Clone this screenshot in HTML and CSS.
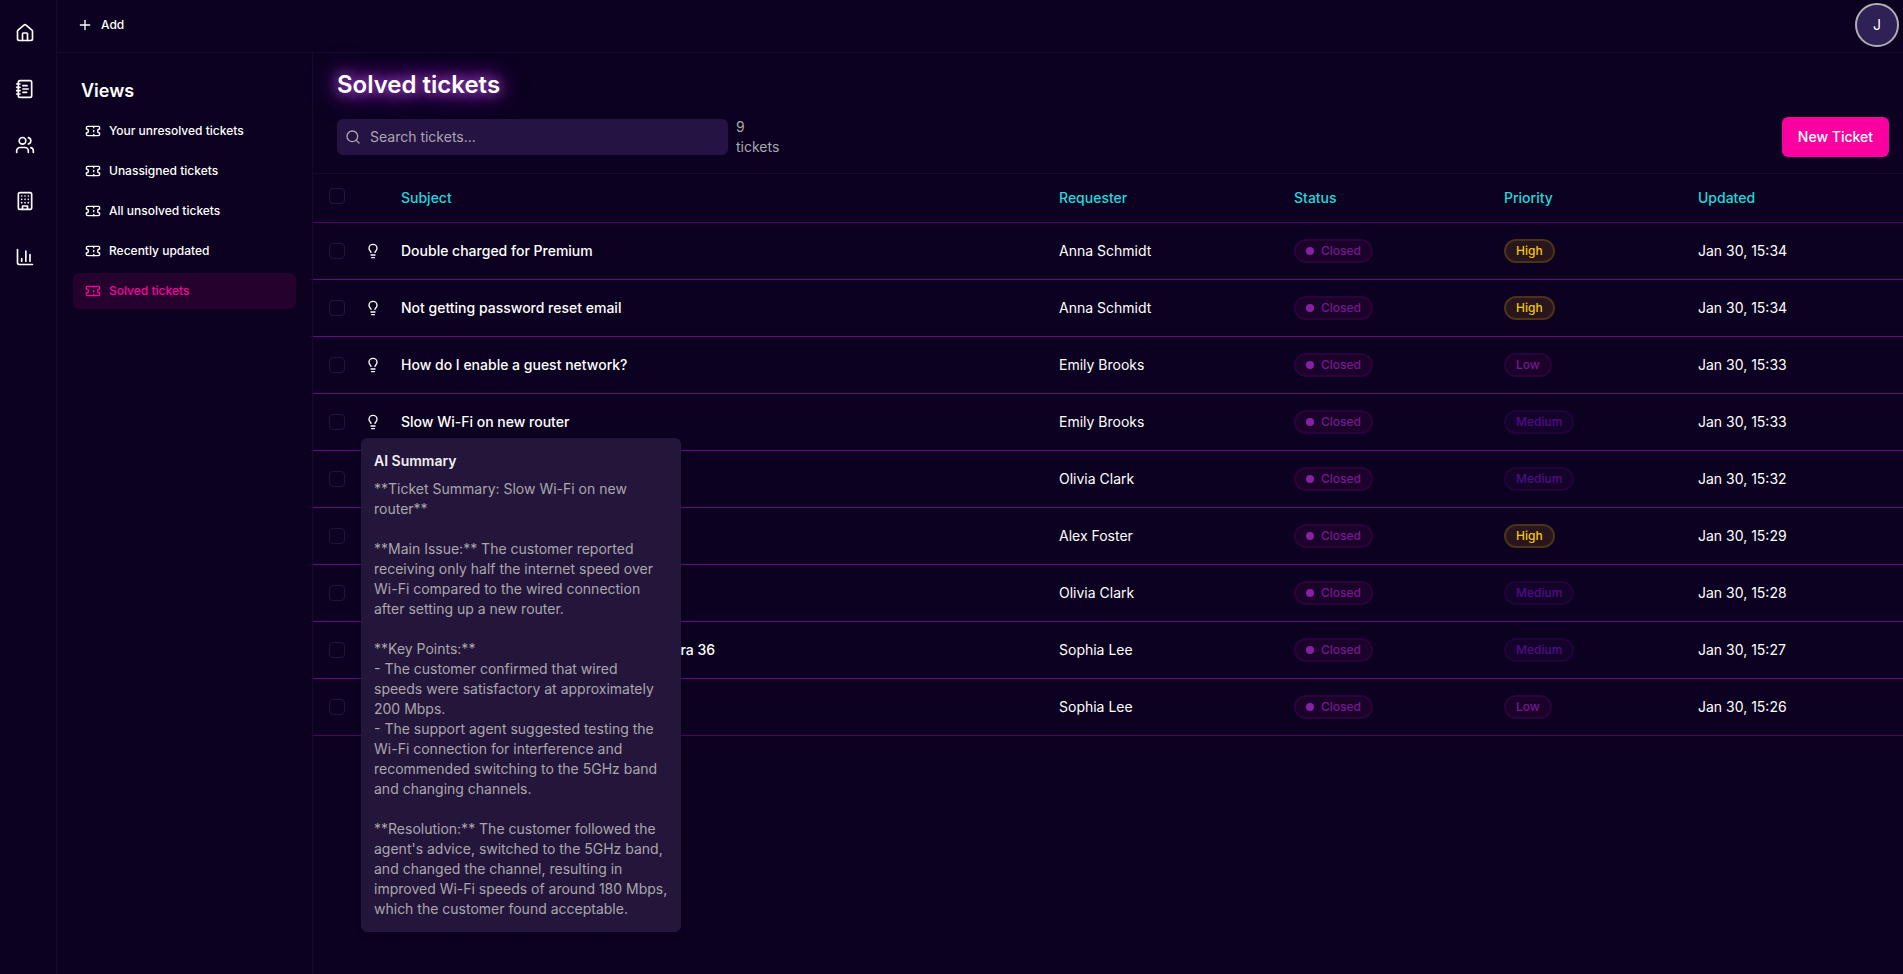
FILE: index.html
```html
<!DOCTYPE html>
<html lang="en">
<head>
<meta charset="utf-8">
<meta name="viewport" content="width=device-width, initial-scale=1">
<title>Solved tickets</title>
<link rel="stylesheet" href="styles.css">
</head>
<body>
<svg class="sprite" aria-hidden="true">
  <symbol id="ticket" viewBox="0 0 24 24"><path d="M2 9a3 3 0 0 1 0 6v2a2 2 0 0 0 2 2h16a2 2 0 0 0 2-2v-2a3 3 0 0 1 0-6V7a2 2 0 0 0-2-2H4a2 2 0 0 0-2 2Z"/><path d="M13 5v2"/><path d="M13 17v2"/><path d="M13 11v2"/></symbol>
  <symbol id="bulb" viewBox="0 0 24 24"><path d="M15 14c.2-1 .7-1.7 1.5-2.5 1-.9 1.5-2.2 1.5-3.5A6 6 0 0 0 6 8c0 1 .2 2.2 1.5 3.5.7.7 1.3 1.5 1.5 2.5"/><path d="M9 18h6"/><path d="M10 22h4"/></symbol>
</svg>
<div class="app">
  <nav class="rail" aria-label="Main">
    <a href="#home" aria-label="Home"><svg class="icon icon-lg" viewBox="0 0 24 24"><path d="M15 21v-8a1 1 0 0 0-1-1h-4a1 1 0 0 0-1 1v8"/><path d="M3 10a2 2 0 0 1 .709-1.528l7-5.999a2 2 0 0 1 2.582 0l7 5.999A2 2 0 0 1 21 10v9a2 2 0 0 1-2 2H5a2 2 0 0 1-2-2z"/></svg></a>
    <a href="#tickets" aria-label="Tickets"><svg class="icon icon-lg" viewBox="0 0 24 24"><path d="M2 6h4"/><path d="M2 10h4"/><path d="M2 14h4"/><path d="M2 18h4"/><rect width="16" height="20" x="4" y="2" rx="2"/><path d="M9.5 8h5"/><path d="M9.5 12H16"/><path d="M9.5 16H14"/></svg></a>
    <a href="#users" aria-label="Users"><svg class="icon icon-lg" viewBox="0 0 24 24"><path d="M16 21v-2a4 4 0 0 0-4-4H6a4 4 0 0 0-4 4v2"/><circle cx="9" cy="7" r="4"/><path d="M22 21v-2a4 4 0 0 0-3-3.87"/><path d="M16 3.13a4 4 0 0 1 0 7.75"/></svg></a>
    <a href="#organizations" aria-label="Organizations"><svg class="icon icon-lg" viewBox="0 0 24 24"><rect width="16" height="20" x="4" y="2" rx="2"/><path d="M9 22v-4h6v4"/><path d="M8 6h.01"/><path d="M16 6h.01"/><path d="M12 6h.01"/><path d="M12 10h.01"/><path d="M12 14h.01"/><path d="M16 10h.01"/><path d="M16 14h.01"/><path d="M8 10h.01"/><path d="M8 14h.01"/></svg></a>
    <a href="#reports" aria-label="Reports"><svg class="icon icon-lg" viewBox="0 0 24 24"><path d="M3 3v16a2 2 0 0 0 2 2h16"/><path d="M18 17V9"/><path d="M13 17V5"/><path d="M8 17v-3"/></svg></a>
  </nav>
  <div class="shell">
    <header class="topbar">
      <button class="add" type="button"><svg class="icon" viewBox="0 0 24 24"><path d="M5 12h14"/><path d="M12 5v14"/></svg>Add</button>
      <button class="avatar" type="button">J</button>
    </header>
    <div class="body">
      <aside class="sidebar">
        <h2>Views</h2>
        <nav class="views" aria-label="Views">
          <a href="#mine"><svg class="icon"><use href="#ticket"/></svg>Your unresolved tickets</a>
          <a href="#unassigned"><svg class="icon"><use href="#ticket"/></svg>Unassigned tickets</a>
          <a href="#unsolved"><svg class="icon"><use href="#ticket"/></svg>All unsolved tickets</a>
          <a href="#recent"><svg class="icon"><use href="#ticket"/></svg>Recently updated</a>
          <a class="active" href="#solved" aria-current="page"><svg class="icon"><use href="#ticket"/></svg>Solved tickets</a>
        </nav>
      </aside>
      <main class="main">
        <div class="heading">
          <h1>Solved tickets</h1>
          <div class="toolbar">
            <div class="search">
              <svg class="icon" viewBox="0 0 24 24"><circle cx="11" cy="11" r="8"/><path d="m21 21-4.3-4.3"/></svg>
              <input type="text" placeholder="Search tickets..." aria-label="Search tickets">
            </div>
            <span class="count">9 tickets</span>
            <button class="primary" type="button">New Ticket</button>
          </div>
        </div>
        <table class="tickets">
          <colgroup><col class="c-check"><col class="c-ai"><col><col class="c-requester"><col class="c-status"><col class="c-priority"><col class="c-updated"></colgroup>
          <thead>
            <tr><th class="check"><input type="checkbox" aria-label="Select all"></th><th class="ai"></th><th>Subject</th><th>Requester</th><th>Status</th><th>Priority</th><th>Updated</th></tr>
          </thead>
          <tbody>
            <tr><td class="check"><input type="checkbox" aria-label="Select ticket"></td><td class="ai"><button class="hint" type="button" aria-label="AI summary"><svg class="icon"><use href="#bulb"/></svg></button></td><td class="subject">Double charged for Premium</td><td>Anna Schmidt</td><td><span class="pill closed">Closed</span></td><td><span class="pill high">High</span></td><td>Jan 30, 15:34</td></tr>
            <tr><td class="check"><input type="checkbox" aria-label="Select ticket"></td><td class="ai"><button class="hint" type="button" aria-label="AI summary"><svg class="icon"><use href="#bulb"/></svg></button></td><td class="subject">Not getting password reset email</td><td>Anna Schmidt</td><td><span class="pill closed">Closed</span></td><td><span class="pill high">High</span></td><td>Jan 30, 15:34</td></tr>
            <tr><td class="check"><input type="checkbox" aria-label="Select ticket"></td><td class="ai"><button class="hint" type="button" aria-label="AI summary"><svg class="icon"><use href="#bulb"/></svg></button></td><td class="subject">How do I enable a guest network?</td><td>Emily Brooks</td><td><span class="pill closed">Closed</span></td><td><span class="pill low">Low</span></td><td>Jan 30, 15:33</td></tr>
            <tr><td class="check"><input type="checkbox" aria-label="Select ticket"></td><td class="ai"><div class="anchor"><button class="hint" type="button" aria-label="AI summary"><svg class="icon"><use href="#bulb"/></svg></button>
              <div class="popover"><h3>AI Summary</h3><p>**Ticket Summary: Slow Wi-Fi on new router**

**Main Issue:** The customer reported receiving only half the internet speed over Wi-Fi compared to the wired connection after setting up a new router.

**Key Points:**
- The customer confirmed that wired speeds were satisfactory at approximately 200 Mbps.
- The support agent suggested testing the Wi-Fi connection for interference and recommended switching to the 5GHz band and changing channels.

**Resolution:** The customer followed the agent's advice, switched to the 5GHz band, and changed the channel, resulting in improved Wi-Fi speeds of around 180 Mbps, which the customer found acceptable.</p></div></div></td><td class="subject">Slow Wi-Fi on new router</td><td>Emily Brooks</td><td><span class="pill closed">Closed</span></td><td><span class="pill medium">Medium</span></td><td>Jan 30, 15:33</td></tr>
            <tr><td class="check"><input type="checkbox" aria-label="Select ticket"></td><td class="ai"></td><td class="subject"></td><td>Olivia Clark</td><td><span class="pill closed">Closed</span></td><td><span class="pill medium">Medium</span></td><td>Jan 30, 15:32</td></tr>
            <tr><td class="check"><input type="checkbox" aria-label="Select ticket"></td><td class="ai"></td><td class="subject"></td><td>Alex Foster</td><td><span class="pill closed">Closed</span></td><td><span class="pill high">High</span></td><td>Jan 30, 15:29</td></tr>
            <tr><td class="check"><input type="checkbox" aria-label="Select ticket"></td><td class="ai"></td><td class="subject"></td><td>Olivia Clark</td><td><span class="pill closed">Closed</span></td><td><span class="pill medium">Medium</span></td><td>Jan 30, 15:28</td></tr>
            <tr><td class="check"><input type="checkbox" aria-label="Select ticket"></td><td class="ai"></td><td class="subject">Question about the new battery life for Ultra 36</td><td>Sophia Lee</td><td><span class="pill closed">Closed</span></td><td><span class="pill medium">Medium</span></td><td>Jan 30, 15:27</td></tr>
            <tr><td class="check"><input type="checkbox" aria-label="Select ticket"></td><td class="ai"></td><td class="subject"></td><td>Sophia Lee</td><td><span class="pill closed">Closed</span></td><td><span class="pill low">Low</span></td><td>Jan 30, 15:26</td></tr>
          </tbody>
        </table>
      </main>
    </div>
  </div>
</div>
</body>
</html>
```
FILE: styles.css
```css
:root {
  --bg: #0c0120;
  --line: #170b2c;
  --row-line: #6c0681;
  --text: #fff;
  --muted: #aaa7ab;
  --accent: #fa00a0;
}

* { box-sizing: border-box; }

body {
  margin: 0;
  background: var(--bg);
  color: var(--text);
  font: 14px/20px Inter, sans-serif;
}

h1, h2, h3, p { margin: 0; }
a { color: inherit; text-decoration: none; }
button { border: 0; background: none; color: inherit; font: inherit; cursor: pointer; }

.sprite { display: none; }

.icon {
  display: block;
  flex: none;
  width: 16px;
  height: 16px;
  fill: none;
  stroke: currentColor;
  stroke-width: 2;
  stroke-linecap: round;
  stroke-linejoin: round;
}
.icon-lg { width: 20px; height: 20px; }

.app { display: flex; min-height: 100vh; }

.rail {
  display: flex;
  flex: none;
  flex-direction: column;
  gap: 16px;
  padding: 13px 11px 13px 5px;
  border-right: 1px solid var(--line);
}
.rail a { padding: 10px; }

.shell { display: flex; flex: 1; flex-direction: column; min-width: 0; }

.topbar {
  display: flex;
  align-items: center;
  justify-content: space-between;
  padding: 3px 4px 5px;
  border-bottom: 1px solid var(--line);
}
.add {
  display: flex;
  align-items: center;
  gap: 8px;
  padding: 8px 16px;
  font-size: 12px;
  font-weight: 500;
}
.avatar {
  width: 44px;
  height: 44px;
  padding: 0;
  border: 2px solid #b2afb2;
  border-radius: 50%;
  background: #2f2056;
}

.body { display: flex; flex: 1; }

.sidebar {
  flex: none;
  width: 256px;
  padding: 24px 16px;
  border-right: 1px solid var(--line);
}
.sidebar h2 { padding: 0 8px; font-size: 18px; font-weight: 600; line-height: 28px; }
.views { display: flex; flex-direction: column; gap: 4px; margin-top: 8px; }
.views a {
  display: flex;
  align-items: center;
  gap: 8px;
  height: 36px;
  padding: 0 12px;
  border-radius: 6px;
  font-size: 12px;
  font-weight: 500;
}
.views .active { background: #25012d; color: var(--accent); }

.main { flex: 1; min-width: 0; }

.heading { padding: 16px 14px 16px 24px; border-bottom: 1px solid var(--line); }
.heading h1 {
  font-size: 24px;
  font-weight: 600;
  line-height: 32px;
  text-shadow: 0 0 12px #a045cc, 0 0 20px #a045cc, 0 0 30px #a045cc;
}
.toolbar { display: flex; align-items: center; gap: 8px; margin-top: 16px; }
.search {
  position: relative;
  display: flex;
  flex: 0 1 391px;
  align-items: center;
  gap: 9px;
  height: 36px;
  padding: 0 8px;
  border-radius: 6px;
  background: #251344;
  color: var(--muted);
}
.search input {
  flex: 1;
  min-width: 0;
  padding: 0;
  border: 0;
  outline: 0;
  background: none;
  color: inherit;
  font: inherit;
}
.search input::placeholder { color: inherit; opacity: 1; }
.count { width: min-content; color: var(--muted); }
.primary {
  height: 40px;
  margin-left: auto;
  padding: 0 16px;
  border-radius: 6px;
  background: var(--accent);
  font-weight: 500;
}

.tickets { width: 100%; border-spacing: 0; table-layout: fixed; }
.c-check { width: 48px; }
.c-ai { width: 24px; }
.c-requester { width: 235px; }
.c-status { width: 210px; }
.c-priority { width: 194px; }
.c-updated { width: 221px; }

.tickets th, .tickets td {
  padding: 0 16px;
  border-bottom: 1px solid var(--row-line);
  text-align: left;
  white-space: nowrap;
}
.tickets th { height: 49px; color: #22d8dc; font-weight: 500; }
.tickets td { height: 57px; }
.tickets tbody tr:last-child td { border-color: #480560; }
.tickets thead th { border-color: #4f0563; }
.tickets .ai { padding: 0; }
.tickets .subject { font-weight: 500; }
.tickets th.check { padding-bottom: 4px; }

.check input {
  display: block;
  width: 16px;
  height: 16px;
  margin: 0;
  border: 1px solid #231538;
  border-radius: 4px;
  appearance: none;
}

.hint { display: block; padding: 4px; }
.anchor { position: relative; }

.popover {
  position: absolute;
  z-index: 1;
  top: calc(100% + 4px);
  left: 0;
  width: 320px;
  padding: 12px;
  border: 1px solid #25163c;
  border-radius: 6px;
  background: #24163b;
  box-shadow: 0 4px 6px rgba(0, 0, 0, .1);
}
.popover h3 { color: #f0eef2; font-size: 14px; font-weight: 600; line-height: 20px; }
.popover p { margin-top: 8px; color: #aaa6ab; white-space: pre-line; }

.pill {
  display: inline-flex;
  align-items: center;
  gap: 7px;
  height: 24px;
  padding: 0 10px;
  border: 2px solid;
  border-radius: 12px;
  font-size: 12px;
  font-weight: 500;
  vertical-align: middle;
}
.closed { border-color: #2a0338; background: #1a022a; color: #781890; }
.closed::before { width: 8px; height: 8px; border-radius: 50%; background: #8720a3; content: ""; }
.high { border-color: #4b3317; background: #28151e; color: #f5c800; }
.low { border-color: #2a0338; background: #1a022a; color: #781890; }
.medium { border-color: #1f0437; background: #15022b; color: #4c0e86; }
```
